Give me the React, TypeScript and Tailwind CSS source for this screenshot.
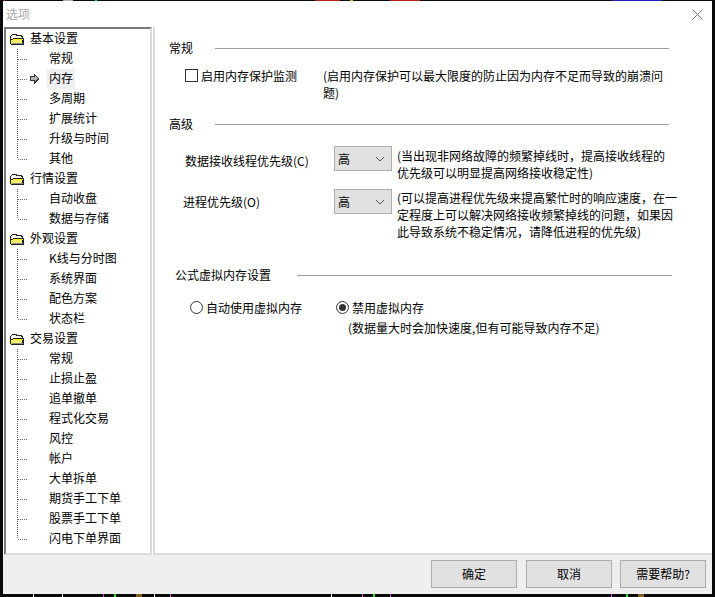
import React from "react";

const font = { fontFamily: '"Noto Sans CJK SC","Liberation Sans",sans-serif' };

function Folder() {
  return (
    <svg width="16" height="13" viewBox="0 0 16 13" className="shrink-0" shapeRendering="crispEdges">
      <path d="M3 1h5v1h5v1h1v2h1v7H2v-1H1V3h1V2h1z" fill="#222" />
      <path d="M3 2h4v1h5v1h1v1H4v1H2V3h1z" fill="#f4f4f4" />
      <path d="M4 6h10v1h-1v3H3v1H2V7h2z" fill="#fff200" />
      <path d="M3 7h1v1H3zM5 7h1v1H5zM7 7h1v1H7zM9 7h1v1H9zM11 7h1v1h-1zM4 8h1v1H4zM6 8h1v1H6zM8 8h1v1H8zM10 8h1v1h-1zM12 8h1v1h-1zM3 9h1v1H3zM5 9h1v1H5zM7 9h1v1H7zM9 9h1v1H9zM11 9h1v1h-1z" fill="#f4f4d0" />
      <path d="M3 10h11v1H3z" fill="#8a8a8a" />
    </svg>
  );
}

function Connector({ last, selected }: { last: boolean; selected?: boolean }) {
  return (
    <svg width="32" height="20" viewBox="0 0 32 20" className="shrink-0" shapeRendering="crispEdges">
      <line x1="0.5" y1="0" x2="0.5" y2={last ? 10 : 20} stroke="#666" strokeDasharray="1 1" />
      <line x1="1" y1="10.5" x2="11" y2="10.5" stroke="#666" strokeDasharray="1 1" />
      {selected && (
        <>
          <path d="M13 7h4V5h1v1h1v1h1v1h1v1h1v2h-1v1h-1v1h-1v1h-1v1h-1v-3h-4z" fill="#333" />
          <path d="M14 8h4V7h1v1h1v1h1v1h-1v1h-1v1h-1v-1h-4z" fill="#b4b4b4" />
        </>
      )}
    </svg>
  );
}

const tree: [string, string[]][] = [
  ["基本设置", ["常规", "内存", "多周期", "扩展统计", "升级与时间", "其他"]],
  ["行情设置", ["自动收盘", "数据与存储"]],
  ["外观设置", ["K线与分时图", "系统界面", "配色方案", "状态栏"]],
  ["交易设置", ["常规", "止损止盈", "追单撤单", "程式化交易", "风控", "帐户", "大单拆单", "期货手工下单", "股票手工下单", "闪电下单界面"]],
];

function Tree() {
  return (
    <div className="w-[148px] h-[528px] shrink-0 bg-white border-t-2 border-l-2 border-[#7a7a7a] border-r-2 border-r-[#dcdcdc] border-b-2 border-b-[#dcdcdc] pl-[3px] text-[12px] text-black">
      {tree.map(([head, items]) => (
        <div key={head}>
          <div className="h-5 flex items-center">
            <Folder />
            <span className="ml-[5px] leading-[18px] pb-[2px]">{head}</span>
          </div>
          {items.map((it, i) => {
            const sel = head === "基本设置" && it === "内存";
            return (
              <div key={it} className="h-5 flex items-center pl-[8px]">
                <Connector last={i === items.length - 1} selected={sel} />
                <span className={"leading-[18px] pb-[2px] " + (sel ? "bg-[#efefef] -ml-[2px] px-[2px]" : "")}>{it}</span>
              </div>
            );
          })}
        </div>
      ))}
    </div>
  );
}

function Section({ title, gap, width }: { title: string; gap: string; width: string }) {
  return (
    <div className="flex items-center h-5">
      <span className="whitespace-nowrap leading-[20px]">{title}</span>
      <div className={"h-px bg-[#a0a0a0] " + gap + " " + width} />
    </div>
  );
}

function Select() {
  return (
    <div className="w-[58px] h-[25px] shrink-0 bg-[#e1e1e1] border border-[#adadad] flex items-center justify-between pl-[3px] pr-[6px]">
      <span>高</span>
      <svg width="10" height="6" viewBox="0 0 10 6">
        <path d="M1 1l4 4 4-4" fill="none" stroke="#555" strokeWidth="1" />
      </svg>
    </div>
  );
}

function Button({ label, className }: { label: string; className?: string }) {
  return (
    <div className={"w-[86px] h-[28px] bg-[#e1e1e1] border border-[#adadad] flex items-center justify-center text-[12px] text-black " + (className ?? "")}>
      {label}
    </div>
  );
}

const topBits = [
  ["w-[4px]", "bg-[#0a0a0a]"], ["w-[1px]", "bg-[#e02020]"], ["w-[58px]", "bg-[#0a0a0a]"], ["w-[10px]", "bg-[#b0b0b0]"],
  ["w-[22px]", "bg-[#0a0a0a]"], ["w-[2px]", "bg-[#20c0c0]"], ["w-[218px]", "bg-[#0a0a0a]"], ["w-[25px]", "bg-[#b02020]"],
  ["w-[10px]", "bg-[#0a0a0a]"], ["w-[3px]", "bg-[#c0c020]"], ["w-[37px]", "bg-[#0a0a0a]"], ["w-[30px]", "bg-[#b02020]"],
  ["w-[192px]", "bg-[#0a0a0a]"], ["w-[50px]", "bg-[#2020c0]"],
];

const bottomBits = [
  ["w-[33px]", "bg-transparent"], ["w-[1px]", "bg-white"], ["w-[28px]", "bg-transparent"], ["w-[1px]", "bg-white"],
  ["w-[40px]", "bg-transparent"], ["w-[1px]", "bg-[#e040e0]"], ["w-[10px]", "bg-transparent"], ["w-[2px]", "bg-[#30e030]"],
  ["w-[20px]", "bg-transparent"], ["w-[6px]", "bg-[#806020]"], ["w-[12px]", "bg-transparent"], ["w-[1px]", "bg-white"],
  ["w-[15px]", "bg-transparent"], ["w-[1px]", "bg-[#e040e0]"], ["w-[160px]", "bg-transparent"], ["w-[1px]", "bg-white"],
  ["w-[30px]", "bg-transparent"], ["w-[1px]", "bg-[#e040e0]"], ["w-[10px]", "bg-transparent"], ["w-[2px]", "bg-[#30e030]"],
  ["w-[15px]", "bg-transparent"], ["w-[1px]", "bg-[#e040e0]"], ["w-[220px]", "bg-transparent"], ["w-[1px]", "bg-[#e040e0]"],
  ["w-[14px]", "bg-transparent"], ["w-[2px]", "bg-[#30e030]"], ["w-[10px]", "bg-transparent"], ["w-[6px]", "bg-[#806020]"],
];

export default function App() {
  return (
    <div style={font} className="w-[715px] h-[597px] bg-[#0a0a0a] overflow-hidden flex flex-col">
      <div className="h-px flex shrink-0">
        {topBits.map(([w, c], i) => (
          <div key={i} className={w + " " + c} />
        ))}
      </div>
      <div className="w-[709px] h-[593px] ml-[3px] bg-white flex flex-col shrink-0">
        <div className="h-[26px] shrink-0 flex items-center justify-between pl-[3px] pr-[9px] text-[12px] text-[#a8a8a8]">
          <span>选项</span>
          <svg width="11" height="11" viewBox="0 0 11 11">
            <path d="M0.5 0.5l10 10M10.5 0.5l-10 10" stroke="#777" strokeWidth="1" />
          </svg>
        </div>
        <div className="flex h-[528px] shrink-0 pl-px">
          <Tree />
          <div className="w-px" />
          <div className="flex-1 border-b-2 border-[#dcdcdc] border-l-2 border-l-[#dcdcdc] text-[12px] text-black pl-[14px] pt-[11px] leading-[17px]">
            <Section title="常规" gap="ml-[22px]" width="w-[454px]" />
            <div className="flex mt-[9px] pl-[16px]">
              <div className="flex items-start w-[138px] shrink-0">
                <div className="w-[13px] h-[13px] border border-[#333] bg-white mt-[2px] mr-[3px] shrink-0" />
                <span>启用内存保护监测</span>
              </div>
              <p className="w-[345px]">(启用内存保护可以最大限度的防止因为内存不足而导致的崩溃问题)</p>
            </div>
            <div className="mt-[13px]">
              <Section title="高级" gap="ml-[22px]" width="w-[454px]" />
            </div>
            <div className="flex mt-[12px] pl-[16px]">
              <span className="w-[149px] shrink-0 pt-[6px]">数据接收线程优先级(C)</span>
              <Select />
              <p className="w-[276px] ml-[5px] mt-px">(当出现非网络故障的频繁掉线时，提高接收线程的优先级可以明显提高网络接收稳定性)</p>
            </div>
            <div className="flex mt-[8px] pl-[14px]">
              <span className="w-[151px] shrink-0 pt-[4px]">进程优先级(O)</span>
              <Select />
              <p className="w-[284px] ml-[5px]">(可以提高进程优先级来提高繁忙时的响应速度，在一定程度上可以解决网络接收频繁掉线的问题，如果因此导致系统不稳定情况，请降低进程的优先级)</p>
            </div>
            <div className="mt-[25px] ml-[6px]">
              <Section title="公式虚拟内存设置" gap="ml-[26px]" width="w-[375px]" />
            </div>
            <div className="flex mt-[14px] pl-[21px] items-start">
              <label className="flex items-center w-[146px] shrink-0">
                <span className="w-[13px] h-[13px] rounded-full border border-[#333] bg-white mr-[3px]" />
                自动使用虚拟内存
              </label>
              <div>
                <label className="flex items-center">
                  <span className="w-[13px] h-[13px] rounded-full border border-[#333] bg-white mr-[3px] flex items-center justify-center">
                    <span className="w-[7px] h-[7px] rounded-full bg-[#333]" />
                  </span>
                  禁用虚拟内存
                </label>
                <p className="mt-[3px] ml-[12px] whitespace-nowrap">(数据量大时会加快速度,但有可能导致内存不足)</p>
              </div>
            </div>
          </div>
        </div>
        <div className="flex-1 bg-[#efefef] flex items-start justify-end pt-[5px] pr-[6px]">
          <Button label="确定" />
          <Button label="取消" className="ml-[9px]" />
          <Button label="需要帮助?" className="ml-[8px]" />
        </div>
      </div>
      <div className="h-[3px] flex shrink-0">
        {bottomBits.map(([w, c], i) => (
          <div key={i} className={w + " " + c} />
        ))}
      </div>
    </div>
  );
}
